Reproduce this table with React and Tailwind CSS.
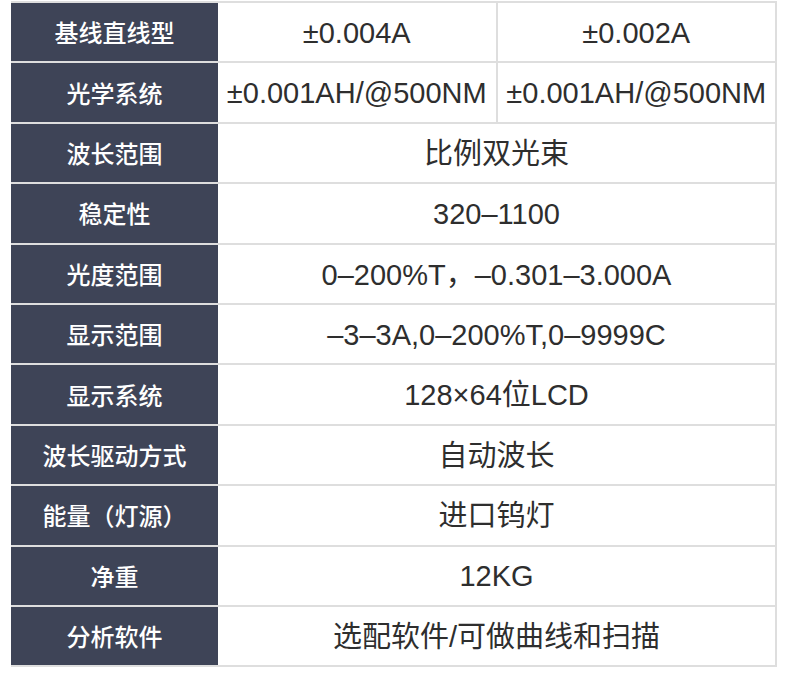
const ROWS = [
  { label: "基线直线型", values: ["±0.004A", "±0.002A"] },
  { label: "光学系统", values: ["±0.001AH/@500NM", "±0.001AH/@500NM"] },
  { label: "波长范围", values: ["比例双光束"] },
  { label: "稳定性", values: ["320–1100"] },
  { label: "光度范围", values: ["0–200%T，–0.301–3.000A"] },
  { label: "显示范围", values: ["–3–3A,0–200%T,0–9999C"] },
  { label: "显示系统", values: ["128×64位LCD"] },
  { label: "波长驱动方式", values: ["自动波长"] },
  { label: "能量（灯源）", values: ["进口钨灯"] },
  { label: "净重", values: ["12KG"] },
  { label: "分析软件", values: ["选配软件/可做曲线和扫描"] },
];

export default function App() {
  return (
    <div
      className="w-[790px] h-[699px] bg-white pt-[1px] pl-[11px]"
      style={{ fontFamily: '"Liberation Sans", "Noto Sans CJK SC", sans-serif' }}
    >
      <div className="w-[766px] border-b-2 border-r-2 border-[#dedede]">
        {ROWS.map((row) => (
          <div key={row.label} className="flex h-[60.4px] border-t-2 border-[#dedede]">
            <div
              className="w-[207px] shrink-0 bg-[#3e4457] flex items-center justify-center text-white text-[24px] font-medium"
              style={{ fontFamily: '"Noto Sans CJK SC", sans-serif' }}
            >
              {row.label}
            </div>
            {row.values.map((v, i) => (
              <div
                key={i}
                className={
                  "flex-1 flex items-center justify-center pt-[3px] text-[#2e2e2e] text-[29px] whitespace-nowrap " +
                  (i === 0 && row.values.length > 1 ? "border-r-2 border-[#dedede]" : "")
                }
              >
                {v}
              </div>
            ))}
          </div>
        ))}
      </div>
    </div>
  );
}
